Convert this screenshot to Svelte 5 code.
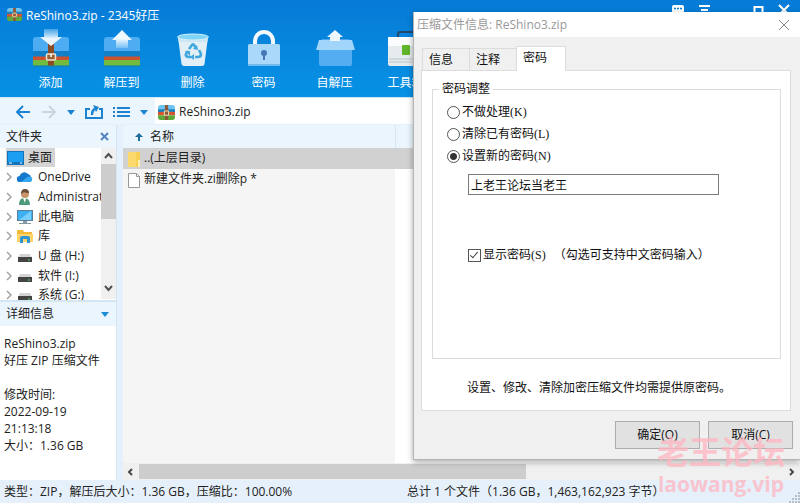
<script>
  let choice = $state('new');
  let password = $state('上老王论坛当老王');
  let showPassword = $state(true);

  const tools = [
    { id: 'add', label: '添加' },
    { id: 'extract', label: '解压到' },
    { id: 'delete', label: '删除' },
    { id: 'lock', label: '密码' },
    { id: 'sfx', label: '自解压' },
    { id: 'box', label: '工具箱' }
  ];
  const tree = [
    { icon: 'cloud', label: 'OneDrive' },
    { icon: 'user', label: 'Administrator' },
    { icon: 'pc', label: '此电脑' },
    { icon: 'library', label: '库' },
    { icon: 'drive', label: 'U 盘 (H:)' },
    { icon: 'drive', label: '软件 (I:)' },
    { icon: 'drive', label: '系统 (G:)' }
  ];
  const options = [
    { id: 'none', label: '不做处理(K)' },
    { id: 'clear', label: '清除已有密码(L)' },
    { id: 'new', label: '设置新的密码(N)' }
  ];
</script>

{#snippet archive(size)}
  <svg width={size} height={size} viewBox="0 0 16 16">
    <path d="M0 4q0-3 3-3h10q3 0 3 3v2H0z" fill="#6cc4f4" />
    <rect y="5" width="16" height="3" fill="#1f7fb8" />
    <rect y="7.500" width="16" height="3" fill="#d4552f" />
    <path d="M0 10.500h16v2q0 2.500-2 2.500H2q-2 0-2-2.500z" fill="#5fa83a" />
    <rect x="6.500" y="1" width="3" height="14" fill="#8a5a3a" />
    <rect x="6" y="6.500" width="4" height="4" rx=".5" fill="#8a5a3a" stroke="#f1dfae" />
  </svg>
{/snippet}

<div class="window">
  <header>
    <div class="titlebar">
      {@render archive(15)}
      <h1>ReShino3.zip - 2345好压</h1>
      <div class="controls">
        <button aria-label="反馈"><svg width="14" height="12"><rect x="1" y="1" width="12" height="9" rx="2" fill="#fff" /><path d="M3 4.500h2m1 0h2m1 0h2" stroke="#0a80d8" stroke-width="1.500" /></svg></button>
        <button aria-label="菜单"><svg width="14" height="12"><path d="M1 2h11M3 6h7" stroke="#fff" stroke-width="2" /><path d="M3 8h7l-3.500 4z" fill="#fff" /></svg></button>
        <button class="max" aria-label="最大化"><svg width="12" height="12"><rect x="1.500" y="3" width="8" height="8" fill="none" stroke="#fff" stroke-width="2" /></svg></button>
        <button aria-label="关闭"><svg width="12" height="12"><path d="M1 1l10 10M11 1 1 11" stroke="#fff" stroke-width="2" /></svg></button>
      </div>
    </div>
    <div class="toolbar">
      {#each tools as t}
        <button class="tool">
          <svg width="40" height="40" viewBox="0 0 40 40">
            {#if t.id === 'add' || t.id === 'extract'}
              <path d="M2 11q0-3 3-3h30q3 0 3 3v13H2z" fill="#4dacf2" />
              <path d="M2 22h36v6H2z" fill="#1280c8" />
              <path d="M2 27.500h36v4H2z" fill="#ce5230" />
              <path d="M2 31h36v5.500H2z" fill="#73bb3e" />
              <path d="M2 36.500h36v1H2z" fill="#2e7a55" opacity=".5" />
              {#if t.id === 'add'}
                <path d="M17 14h6v22.500h-6z" fill="#8a4c28" />
                <rect x="15.500" y="25" width="9" height="6" rx="1" fill="#9b6238" stroke="#f1e3cf" stroke-width="1.500" />
                <path d="M20 25v3" stroke="#fff" stroke-width="1.500" />
                <path d="M13 0h14v8h4L20 17 9 8h4z" fill="url(#down)" />
              {:else}
                <path d="M20 1 30 11h-4v8H14v-8h-4z" fill="url(#up)" />
              {/if}
            {:else if t.id === 'delete'}
              <path d="M5 8h30l-3.500 27q-.5 2-2.500 2H11q-2 0-2.500-2z" fill="#e3eff7" />
              <path d="M5 8h30l-.7 5H5.700z" fill="#cce6f4" />
              <ellipse cx="20" cy="8" rx="15.500" ry="3" fill="#80d5f5" stroke="#d3f0fb" />
              <g fill="none" stroke="#41a8df" stroke-width="2.600"><path d="m16 20 3-4q1-1 2 0l2 3M26 21l2 4q0 3-3 3h-3M18 28h-3q-3-1-2-3l2-3" /></g>
              <path d="m25 21-5-1 4-4zM21 25v6l-4-3zM12 22h5v5z" fill="#41a8df" />
            {:else if t.id === 'lock'}
              <path d="M11 17v-5a9 9 0 0 1 18 0v5" fill="none" stroke="#f4faff" stroke-width="4" />
              <rect x="4" y="15" width="32" height="22" rx="1.500" fill="#a9d8fb" />
              <path d="M4 35h32v2H4z" fill="#70b8ee" />
              <circle cx="20" cy="24" r="3" fill="#4277b5" /><path d="M19 25h2v6h-2z" fill="#4277b5" />
            {:else if t.id === 'sfx'}
              <path d="M7 10h27l3 10H3z" fill="#4ba4eb" />
              <path d="M4 17h33v18q0 2-2 2H6q-2 0-2-2z" fill="#54adf1" />
              <path d="M4 11h33l3 10H1z" fill="#a2d5fa" />
              <path d="M20 1 28 8h-3v4H15V8h-3z" fill="#edf7ff" />
            {:else}
              <path d="M12 9V5q0-2 2-2h14q2 0 2 2v4" fill="none" stroke="#23496c" stroke-width="2" />
              <rect x="2" y="8" width="36" height="29" rx="2" fill="#e6ebee" /><path d="M2 8h36v9H2z" fill="#fafcfd" />
              <path d="M3 30h34M3 33h34" stroke="#bcc5ca" /><rect x="16" y="16" width="8" height="10" rx="1" fill="#61b52a" />
            {/if}
          </svg>
          <span>{t.label}</span>
        </button>
      {/each}
    </div>
    <svg width="0" height="0" class="defs">
      <linearGradient id="down" x2="0" y2="1"><stop stop-color="#d9f0ff" stop-opacity=".3" /><stop offset=".6" stop-color="#eef8ff" /></linearGradient>
      <linearGradient id="up" x2="0" y2="1"><stop offset=".5" stop-color="#eef8ff" /><stop offset="1" stop-color="#d9f0ff" stop-opacity=".3" /></linearGradient>
    </svg>
  </header>

  <nav>
    <div class="navbuttons">
      <button aria-label="后退"><svg width="16" height="16"><path d="M15 8H2M8 2 2 8l6 6" fill="none" stroke="#1d83d1" stroke-width="2" /></svg></button>
      <button aria-label="前进"><svg width="16" height="16"><path d="M1 8h13M8 2l6 6-6 6" fill="none" stroke="#ccd4dc" stroke-width="2" /></svg></button>
      <button aria-label="历史"><svg width="8" height="5"><path d="M0 0h8L4 5z" fill="#1d83d1" /></svg></button>
      <button aria-label="上一级"><svg width="18" height="16"><path d="M5 5H1v9h16V5h-3" fill="none" stroke="#1d83d1" stroke-width="2" /><path d="M7 11q0-5 3-6" fill="none" stroke="#1d83d1" stroke-width="2.500" /><path d="m8 1 6 2-3 5z" fill="#1d83d1" /></svg></button>
      <button aria-label="视图"><svg width="17" height="12"><path d="M0 2h2m2 0h13M0 6h2m2 0h13M0 10h2m2 0h13" stroke="#1d83d1" stroke-width="2" /></svg></button>
      <button aria-label="视图选项"><svg width="8" height="5"><path d="M0 0h8L4 5z" fill="#1d83d1" /></svg></button>
    </div>
    <div class="address">{@render archive(17)}<span>ReShino3.zip</span></div>
  </nav>

  <main>
    <aside>
      <h2>文件夹<button aria-label="关闭文件夹"><svg width="9" height="9"><path d="m1 1 7 7M8 1 1 8" stroke="#5684bd" stroke-width="2" /></svg></button></h2>
      <div class="treebox">
        <ul>
          <li class="desktop"><a href="#desktop"><svg width="17" height="14"><rect x=".5" y=".5" width="16" height="13" fill="#1c9ff2" stroke="#1374ba" /><path d="M1 11h15v2H1z" fill="#1374ba" /><path d="M2 12h3m8 0h2" stroke="#fff" /></svg>桌面</a></li>
          {#each tree as n}
            <li>
              <svg width="6" height="10"><path d="m1 1 4 4-4 4" fill="none" stroke="#a2a2a2" stroke-width="1.500" /></svg>
              <svg width="16" height="16" viewBox="0 0 16 16">
                {#if n.icon === 'cloud'}
                  <path d="M3 13a3 3 0 0 1-.5-6 5 5 0 0 1 8.500-2 4 4 0 0 1 3 3 3 3 0 0 1-1 5z" fill="#1479cd" /><path d="M4 13 11 7.500a4 4 0 0 1 4 1.500 3 3 0 0 1-2 4z" fill="#35a8ef" />
                {:else if n.icon === 'user'}
                  <path d="M2 16q0-7 5-7 6 0 6 7z" fill="#4c9a77" /><path d="m6 9 2 5 1-5z" fill="#fff" /><circle cx="8" cy="5" r="4" fill="#c69468" /><path d="M4 5q0-5 4-5t4 4q-4 0-5-1z" fill="#684b38" />
                {:else if n.icon === 'pc'}
                  <rect x=".5" y="1.500" width="15" height="10" fill="#3db0f3" stroke="#5b7f98" /><path d="m2 11 12-9v9z" fill="#79cff9" /><path d="M6 12h4v2H6zM2 14h12v1H2z" fill="#8699a4" />
                {:else if n.icon === 'library'}
                  <path d="M0 2h6l1 2h8v10H0z" fill="#f4bb3a" /><path d="M0 6h16v8H0z" fill="#ffd569" /><path d="M3 15v-5q0-2 2-2h6q2 0 2 2v5h-3v-4H6v4z" fill="#3196d5" />
                {:else}
                  <path d="M3 6h10l2 4H1z" fill="#d4d4d4" /><path d="M1 9h14v5H1z" fill="#444" /><path d="M11 12h2" stroke="#52d268" />
                {/if}
              </svg>
              <a href="#{n.icon}">{n.label}</a>
            </li>
          {/each}
        </ul>
        <div class="vscroll">
          <svg width="9" height="16"><path d="m1 10 3.500-4L8 10" fill="none" stroke="#505050" stroke-width="2" /></svg>
          <div class="vthumb"></div>
          <svg width="9" height="16"><path d="m1 6 3.500 4L8 6" fill="none" stroke="#505050" stroke-width="2" /></svg>
        </div>
      </div>
      <h2 class="info">详细信息<svg width="8" height="5"><path d="M0 0h8L4 5z" fill="#1d8bd6" /></svg></h2>
      <div class="details">
        <p>ReShino3.zip<br />好压 ZIP 压缩文件</p>
        <p>修改时间:<br />2022-09-19<br />21:13:18<br />大小：1.36 GB</p>
      </div>
    </aside>

    <section class="list">
      <table>
        <thead><tr><th><svg width="8" height="8"><path d="M4 0 8 4H5v4H3V4H0z" fill="#1b6c9c" /></svg>名称</th><th></th></tr></thead>
        <tbody>
          <tr class="selected"><td><svg width="14" height="17"><rect x="1" y="1" width="12" height="15" fill="#fbd96c" /><path d="M9 1h4v15H9z" fill="#f8cf52" /><path d="M11 9h2v7h-2z" fill="#fff0b4" /></svg>..(上层目录)</td><td></td></tr>
          <tr><td><svg width="14" height="17"><path d="M1.500 1.500h8l3 3v11h-11z" fill="#fff" stroke="#999" /><path d="M9.500 1.500v3h3" fill="none" stroke="#999" /></svg>新建文件夹.zi删除p *</td><td></td></tr>
          <tr class="rest"><td></td><td></td></tr>
        </tbody>
      </table>
      <div class="hscroll">
        <svg width="16" height="16"><path d="M9 5 6 8l3 3" fill="none" stroke="#484848" stroke-width="2" /></svg>
        <div class="track"><div class="hthumb"></div></div>
        <svg width="16" height="16"><path d="m6 5 3 3-3 3" fill="none" stroke="#484848" stroke-width="2" /></svg>
      </div>
    </section>
  </main>

  <footer>
    <span>类型：ZIP，解压后大小：1.36 GB，压缩比：100.00%</span>
    <span>总计 1 个文件（1.36 GB，1,463,162,923 字节）</span>
    <svg width="11" height="11"><path d="M9 0h2v2H9zM6 3h2v2H6zM9 3h2v2H9zM3 6h2v2H3zM6 6h2v2H6zM9 6h2v2H9zM0 9h2v2H0zM3 9h2v2H3zM6 9h2v2H6zM9 9h2v2H9z" fill="#b5bfc9" /></svg>
  </footer>

  <form class="dialog" onsubmit={(e) => e.preventDefault()}>
    <div class="caption">
      <span>压缩文件信息: ReShino3.zip</span>
      <button type="button" aria-label="关闭"><svg width="10" height="10"><path d="m0 0 10 10M10 0 0 10" stroke="#888" /></svg></button>
    </div>
    <div class="tabs">
      <button type="button">信息</button>
      <button type="button">注释</button>
      <button type="button" class="active">密码</button>
    </div>
    <div class="panel">
      <fieldset>
        <legend>密码调整</legend>
        {#each options as o}
          <label class="option"><input type="radio" name="mode" value={o.id} bind:group={choice} />{o.label}</label>
        {/each}
        <input class="password" type={showPassword ? 'text' : 'password'} aria-label="新密码" bind:value={password} />
        <div class="show">
          <label><input type="checkbox" bind:checked={showPassword} />显示密码(S)</label>
          <span>（勾选可支持中文密码输入）</span>
        </div>
      </fieldset>
      <p class="note">设置、修改、清除加密压缩文件均需提供原密码。</p>
    </div>
    <div class="actions"><button>确定(O)</button><button type="button">取消(C)</button></div>
  </form>

  <div class="watermark"><span class="cn">老王论坛</span><span>laowang.vip</span></div>
</div>

<style>
  :global(body) { margin: 0; }
  .window {
    position: relative; display: flex; flex-direction: column; height: 100vh; overflow: hidden;
    font: 12px/16px "Open Sans", "Noto Sans CJK SC", sans-serif; color: #222; background: #fff;
  }
  button { font: inherit; color: inherit; border: 0; padding: 0; margin: 0; background: none; display: flex; align-items: center; justify-content: center; }
  a { color: inherit; text-decoration: none; }
  svg { display: block; flex: none; }
  h1, h2, p, ul { margin: 0; padding: 0; font-size: 12px; font-weight: 400; }
  header { height: 97px; flex: none; background: linear-gradient(#067bd7, #0792e4); color: #fff; }
  .defs { position: absolute; }
  .titlebar { display: flex; align-items: center; height: 29px; padding-left: 7px; }
  .titlebar h1 { flex: 1; margin-left: 4px; padding-top: 2px; }
  .controls { display: flex; align-self: flex-start; gap: 13px; padding: 4px 10px 0 0; }
  .controls .max { margin-left: 28px; }
  .toolbar { display: flex; padding-left: 15px; }
  .tool { flex-direction: column; width: 71px; gap: 6px; }

  nav { display: flex; height: 27px; flex: none; background: #eaf5fd; border-top: 1px solid #cfe6f8; box-sizing: border-box; }
  .navbuttons { display: flex; align-items: center; gap: 10px; width: 155px; box-sizing: border-box; padding: 2px 0 0 15px; }
  .address { flex: 1; display: flex; align-items: center; gap: 4px; padding: 2px 0 0 3px; background: #fff; }

  main { flex: 1; min-height: 0; display: flex; background: #e4f1fd; padding-top: 1px; }
  aside { width: 117px; flex: none; display: flex; flex-direction: column; margin-right: 6px; background: #fff; border-right: 1px solid #d4e5f4; box-sizing: border-box; }
  h2 { display: flex; align-items: center; justify-content: space-between; height: 23px; padding: 0 7px 0 6px; background: #eaf5fd; }
  h2.info { height: 26px; border-top: 2px solid #d4e5f4; box-sizing: border-box; }
  .treebox { display: flex; height: 152px; padding-bottom: 1px; box-sizing: border-box; overflow: hidden; }
  .treebox ul { flex: 1; min-width: 0; height: 157px; display: flex; flex-direction: column; overflow: hidden; list-style: none; }
  li { flex: 1; display: flex; align-items: center; gap: 4px; padding-left: 6px; white-space: nowrap; }
  li svg:nth-child(2) { margin: 0 1px; }
  li.desktop a { display: flex; align-items: center; gap: 4px; height: 19px; padding: 0 3px 0 1px; background: #d4d4d4; }
  .vscroll { display: flex; flex-direction: column; align-items: center; width: 15px; background: #f0f0f0; padding-bottom: 3px; box-sizing: border-box; }
  .vthumb { flex: 1; width: 15px; margin-bottom: 61px; background: #cdcdcd; }
  .details { flex: 1; padding: 9px 4px; line-height: 17px; display: flex; flex-direction: column; gap: 17px; white-space: nowrap; overflow: hidden; }

  .list { flex: 1; min-width: 0; display: flex; flex-direction: column; background: #fff; }
  table { width: 100%; flex: 1; border-collapse: collapse; table-layout: fixed; }
  th, td { height: 20px; padding: 1px 0 0; font-weight: 400; text-align: left; vertical-align: middle; }
  th { height: 22px; background: #eaf5fd; }
  th:first-child { width: 272px; border-right: 1px solid #d4e5f4; box-sizing: border-box; padding-left: 12px; }
  td:first-child { background: #f5f5f5; padding-left: 4px; }
  th svg { display: inline-block; margin-right: 7px; }
  td svg { display: inline-block; vertical-align: middle; margin-right: 3px; }
  .selected td, .selected td:first-child { background: #d1d1d1; }
  .rest td { height: auto; }
  .hscroll { display: flex; align-items: center; height: 17px; flex: none; background: #f0f0f0; }
  .track { flex: 1; }
  .hthumb { width: 60%; height: 15px; background: #cdcdcd; }

  footer { display: flex; align-items: center; height: 23px; flex: none; padding-left: 4px; background: #e6f0fa; }
  footer span { padding-top: 1px; }
  footer span:first-child { flex: 0 0 403px; }
  footer span + span { flex: 1; }
  footer svg { align-self: flex-end; }

  .dialog { position: absolute; top: 12px; right: 0; width: 387px; box-sizing: border-box; border-left: 1px solid #b4b4b4; border-bottom: 1px solid #b4b4b4; background: #f0f0f0; box-shadow: 0 2px 6px rgba(0, 0, 0, .35); }
  .caption { display: flex; align-items: center; justify-content: space-between; height: 25px; padding: 0 11px 0 3px; background: #fff; color: #999; }
  .tabs { display: flex; align-items: flex-end; height: 33px; padding-left: 8px; position: relative; }
  .tabs button { width: 47px; height: 22px; box-sizing: border-box; justify-content: flex-start; padding-left: 6px; border: 1px solid #dcdcdc; border-width: 1px 0 0 1px; color: #111; }
  .tabs .active { width: 50px; height: 25px; margin-bottom: -1px; padding-bottom: 2px; background: #fff; border-right-width: 1px; }
  .panel { height: 341px; box-sizing: border-box; margin: 0 9px 0 7px; padding: 10px 9px 0 10px; border: 1px solid #dcdcdc; background: #fff; font-family: "Liberation Serif", "Noto Sans CJK SC", sans-serif; color: #111; }
  fieldset { height: 278px; box-sizing: border-box; margin: 0; padding: 4px 0 0 14px; border: 1px solid #dcdcdc; min-width: 0; }
  legend { margin-left: -8px; padding: 0 3px; line-height: 16px; }
  label { display: flex; align-items: center; gap: 2px; }
  .option { height: 22px; }
  input { font: inherit; color: #111; margin: 0; box-sizing: border-box; }
  input[type='radio'], input[type='checkbox'] { appearance: none; width: 13px; height: 13px; border: 1px solid #555; background: #fff; }
  input[type='radio'] { border-radius: 50%; }
  input[type='radio']:checked { background: radial-gradient(circle, #333 3px, #fff 4px); }
  input[type='checkbox']:checked { position: relative; }
  input[type='checkbox']:checked::after { content: ''; position: absolute; left: 3px; top: 0; width: 3px; height: 7px; border: solid #444; border-width: 0 1px 1px 0; transform: rotate(40deg); }
  .password { display: block; width: 251px; height: 21px; margin: 7px 0 0 21px; padding: 0 2px; border: 1px solid #7a7a7a; background: #fff; }
  .show { display: flex; align-items: center; gap: 8px; margin: 51px 0 0 21px; height: 18px; }
  .note { margin: 21px 0 0 35px; }
  .actions { display: flex; justify-content: flex-end; gap: 8px; padding: 10px 7px; }
  .actions button { width: 85px; height: 28px; border: 1px solid #adadad; box-sizing: border-box; background: #e1e1e1; color: #111; }

  .watermark { position: absolute; right: 15px; bottom: 6px; display: flex; flex-direction: column; align-items: center; font: 700 21px/26px "Open Sans", "Noto Sans CJK SC", sans-serif; color: #ffb6c1; opacity: .75; pointer-events: none; }
  .watermark .cn { font-size: 32px; line-height: 38px; }
</style>
